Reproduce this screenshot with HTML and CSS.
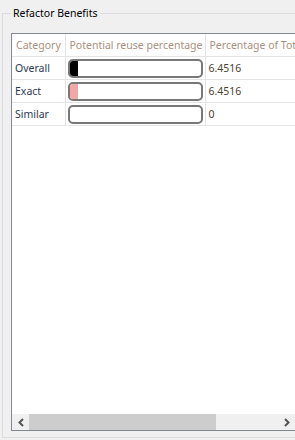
FILE: index.html
```html
<!DOCTYPE html>
<html lang="en">
<head>
    <meta charset="UTF-8">
    <title>Refactor Benefits</title>
    <link rel="stylesheet" href="styles.css">
</head>
<body>
<div class="group">
    <span class="group-title">Refactor Benefits</span>
    <div class="grid">
        <table class="benefits">
            <colgroup>
                <col class="col-category">
                <col class="col-reuse">
                <col class="col-total">
            </colgroup>
            <thead>
            <tr>
                <th>Category</th>
                <th>Potential reuse percentage</th>
                <th>Percentage of Total</th>
            </tr>
            </thead>
            <tbody>
            <tr>
                <td class="name">Overall</td>
                <td><div class="bar"><div class="fill fill-overall" style="width: 6.4516%"></div></div></td>
                <td class="num">6.4516</td>
            </tr>
            <tr>
                <td class="name">Exact</td>
                <td><div class="bar"><div class="fill fill-exact" style="width: 6.4516%"></div></div></td>
                <td class="num">6.4516</td>
            </tr>
            <tr>
                <td class="name">Similar</td>
                <td><div class="bar"><div class="fill" style="width: 0%"></div></div></td>
                <td class="num">0</td>
            </tr>
            </tbody>
        </table>
        <div class="grid-empty"></div>
        <div class="hscroll">
            <div class="scroll-btn">
                <svg width="8" height="9" viewBox="0 0 8 9"><path d="M6 1 L2.5 4.5 L6 8" fill="none" stroke="#555" stroke-width="2"/></svg>
            </div>
            <div class="scroll-track">
                <div class="scroll-thumb"></div>
            </div>
            <div class="scroll-btn">
                <svg width="8" height="9" viewBox="0 0 8 9"><path d="M2 1 L5.5 4.5 L2 8" fill="none" stroke="#555" stroke-width="2"/></svg>
            </div>
        </div>
    </div>
</div>
</body>
</html>
```

FILE: styles.css
```css
html, body {
    margin: 0;
    height: 440px;
    overflow: hidden;
    background: #f0f0f0;
    font-family: "Noto Sans", "Open Sans", sans-serif;
    font-size: 10.5px;
}

.group {
    position: relative;
    margin: 13px 0 0 2px;
    width: 310px;
    height: 425px;
    border: 1px solid #dcdcdc;
    padding: 19px 0 0 8px;
    box-sizing: border-box;
}

.group-title {
    position: absolute;
    top: -8px;
    left: 8px;
    padding: 0 2px;
    background: #f0f0f0;
    color: #000;
    line-height: 15px;
}

.grid {
    display: flex;
    flex-direction: column;
    width: 285px;
    height: 398px;
    border: 1px solid #828790;
    background: #fff;
    box-sizing: border-box;
    overflow: hidden;
}

.benefits {
    border-collapse: collapse;
    table-layout: fixed;
    width: 340px;
}

.col-category {
    width: 53px;
}

.col-reuse {
    width: 140px;
}

.col-total {
    width: 147px;
}

.benefits th, .benefits td {
    border-right: 1px solid #e4e4e4;
    border-bottom: 1px solid #e4e4e4;
    padding: 0 3px;
    height: 22px;
    text-align: left;
    white-space: nowrap;
    overflow: hidden;
}

.benefits th {
    font-weight: normal;
    color: #a8917f;
    padding-left: 4px;
}

.benefits .name {
    color: #2c3b57;
    padding-left: 3px;
}

.benefits .num {
    color: #4b4230;
}

.bar {
    height: 19px;
    border: 2px solid #787878;
    border-radius: 5px;
    box-sizing: border-box;
    overflow: hidden;
    background: #fff;
    margin-left: -1px;
    margin-right: -1px;
}

.fill {
    height: 100%;
}

.fill-overall {
    background: #000;
}

.fill-exact {
    background: #f1a7a7;
}

.grid-empty {
    flex: 1;
}

.hscroll {
    display: flex;
    height: 16px;
    background: #f0f0f0;
}

.scroll-btn {
    width: 17px;
    display: flex;
    align-items: center;
    justify-content: center;
}

.scroll-track {
    flex: 1;
}

.scroll-thumb {
    width: 187px;
    height: 100%;
    background: #cdcdcd;
}
```
